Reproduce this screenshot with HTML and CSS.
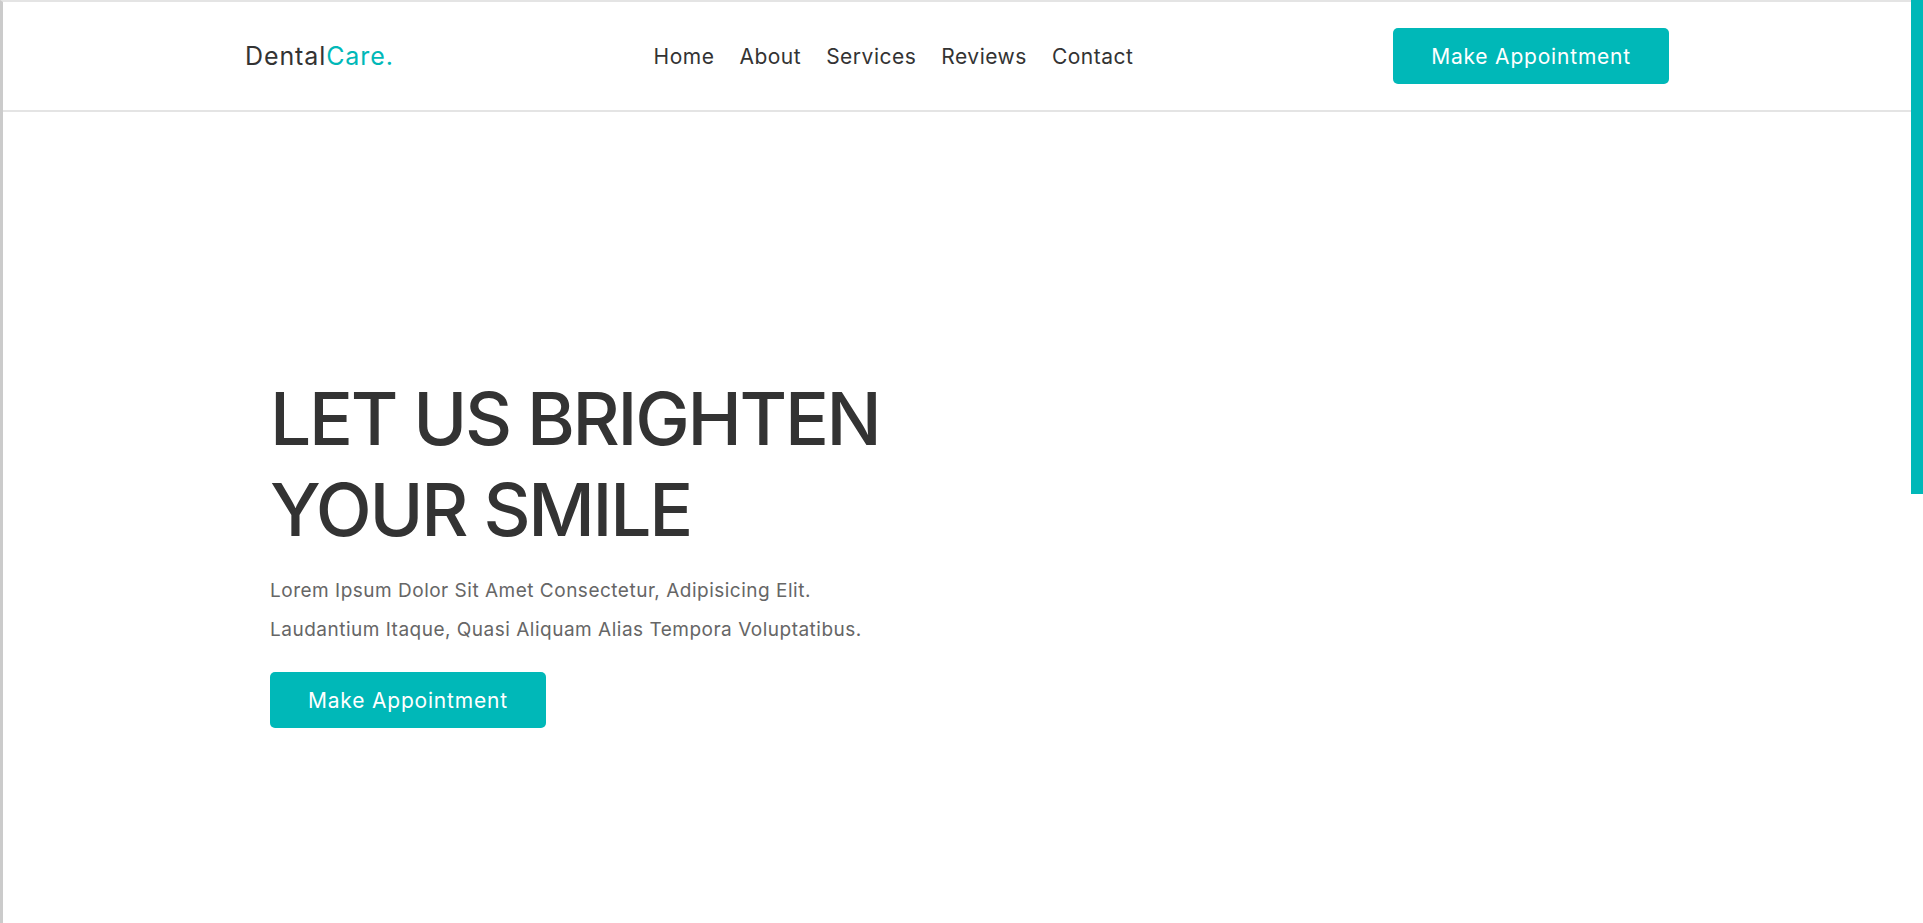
FILE: index.html
```html
<!DOCTYPE html>
<html lang="en">
<head>
<meta charset="utf-8">
<title>DentalCare</title>
<link rel="stylesheet" href="styles.css">
</head>
<body>
<div class="frame">
  <header class="header">
    <div class="header-inner">
      <a class="logo" href="#">Dental<span class="logo-accent">Care.</span></a>
      <nav class="nav">
        <a class="nav-link" href="#">Home</a>
        <a class="nav-link" href="#">About</a>
        <a class="nav-link" href="#">Services</a>
        <a class="nav-link" href="#">Reviews</a>
        <a class="nav-link" href="#">Contact</a>
      </nav>
      <a class="btn" href="#">Make Appointment</a>
    </div>
  </header>
  <main class="hero">
    <div class="hero-inner">
      <h1 class="hero-title">LET US BRIGHTEN<br>YOUR SMILE</h1>
      <p class="hero-text">Lorem Ipsum Dolor Sit Amet Consectetur, Adipisicing Elit.<br>Laudantium Itaque, Quasi Aliquam Alias Tempora Voluptatibus.</p>
      <a class="btn" href="#">Make Appointment</a>
    </div>
  </main>
</div>
<div class="scroll-thumb"></div>
</body>
</html>
```

FILE: styles.css
```css
html, body {
  margin: 0;
  padding: 0;
  height: 100%;
}

body {
  font-family: Inter, "Noto Sans", sans-serif;
  background: #fff;
  color: #333;
  overflow: hidden;
}

a {
  text-decoration: none;
}

.frame {
  min-height: 100vh;
  box-sizing: border-box;
  border-left: 3px solid #cbcbcb;
  border-top: 2px solid #e4e4e4;
  margin-right: 12px;
}

.header {
  border-bottom: 2px solid #e4e4e4;
}

.header-inner {
  max-width: 1424px;
  margin: 0 auto;
  height: 108px;
  display: flex;
  align-items: center;
  justify-content: space-between;
}

.logo {
  font-size: 25px;
  font-weight: 400;
  letter-spacing: 0.9px;
  color: #333;
}

.logo-accent {
  color: #00b8b8;
}

.nav {
  display: flex;
  gap: 25px;
}

.nav-link {
  font-size: 21px;
  font-weight: 400;
  letter-spacing: 0.5px;
  color: #333;
}

.btn {
  display: inline-flex;
  align-items: center;
  justify-content: center;
  box-sizing: border-box;
  height: 56px;
  padding: 0 38px;
  border-radius: 5px;
  background: #00b8b8;
  color: #fff;
  font-size: 21px;
  font-weight: 400;
  letter-spacing: 0.8px;
}

.hero {
  padding-top: 261px;
}

.hero-inner {
  max-width: 1424px;
  margin: 0 auto;
  box-sizing: border-box;
  padding-left: 25px;
}

.hero-title {
  margin: 0;
  font-size: 73px;
  line-height: 91px;
  font-weight: 500;
  letter-spacing: -2.3px;
  color: #333;
}

.hero-text {
  margin: 16px 0 23px;
  font-size: 19px;
  line-height: 39px;
  letter-spacing: 0.5px;
  color: #666;
}

.scroll-thumb {
  position: fixed;
  top: 0;
  right: 0;
  width: 12px;
  height: 494px;
  background: #00b8b8;
}
```
